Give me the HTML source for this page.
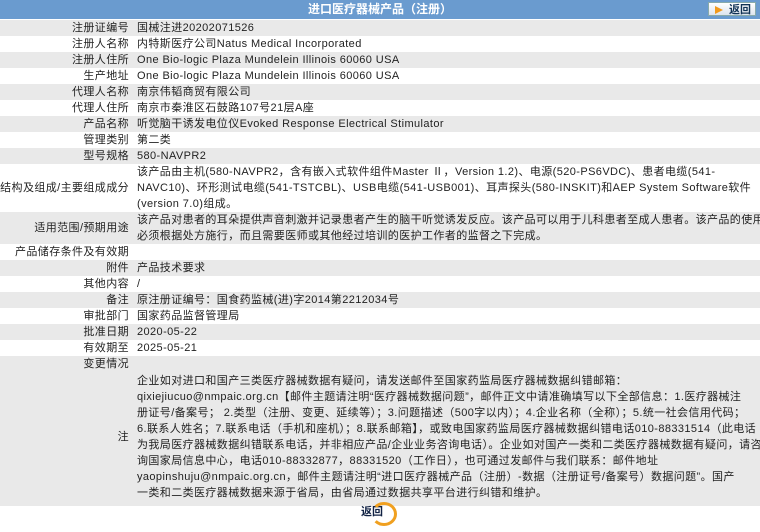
<!DOCTYPE html><html><head><meta charset="utf-8"><style>
body{margin:0;width:760px;height:532px;background:#fff;font:11px "Liberation Sans","Noto Sans CJK SC",sans-serif;letter-spacing:0.4px;color:#222;overflow:hidden;position:relative}
.hd{height:19px;background:#6a9bcf;color:#fff;font-weight:bold;text-align:center;line-height:19px;font-size:12px;letter-spacing:0;border-bottom:1px solid #fff}
.btn{position:absolute;right:4px;top:2px;width:48px;height:14px;background:linear-gradient(#fff,#dde4ee);border:1px solid #8aa;font-size:11px;line-height:14px;color:#135;font-weight:bold;text-align:right;padding-right:4px;box-sizing:border-box;letter-spacing:0}
.btn i{position:absolute;left:6px;top:3px;width:0;height:0;border-left:8px solid #f29a1c;border-top:4px solid transparent;border-bottom:4px solid transparent}
.r{display:flex;line-height:16px;white-space:nowrap}
.g{background:#e9e9e9}
.l{width:137px;text-align:right;padding-right:8px;box-sizing:border-box;flex:none;display:flex;align-items:center;justify-content:flex-end}
.v{flex:1}
.bk{position:absolute;left:361px;top:503px;font-weight:bold;font-size:11px;color:#124;letter-spacing:0}
.bk span{position:absolute;left:10px;top:-1px;width:26px;height:24px;border-radius:50%;border:3px solid #f0a020;border-left-color:transparent;box-sizing:border-box}
</style></head><body>
<div class="hd">进口医疗器械产品（注册）</div>
<div class="btn"><i></i>返回</div>
<div class="r g"><div class="l">注册证编号</div><div class="v">国械注进20202071526</div></div>
<div class="r"><div class="l">注册人名称</div><div class="v">内特斯医疗公司Natus Medical Incorporated</div></div>
<div class="r g"><div class="l">注册人住所</div><div class="v">One Bio-logic Plaza Mundelein Illinois 60060 USA</div></div>
<div class="r"><div class="l">生产地址</div><div class="v">One Bio-logic Plaza Mundelein Illinois 60060 USA</div></div>
<div class="r g"><div class="l">代理人名称</div><div class="v">南京伟韬商贸有限公司</div></div>
<div class="r"><div class="l">代理人住所</div><div class="v">南京市秦淮区石鼓路107号21层A座</div></div>
<div class="r g"><div class="l">产品名称</div><div class="v">听觉脑干诱发电位仪Evoked Response Electrical Stimulator</div></div>
<div class="r"><div class="l">管理类别</div><div class="v">第二类</div></div>
<div class="r g"><div class="l">型号规格</div><div class="v">580-NAVPR2</div></div>
<div class="r"><div class="l">结构及组成/主要组成成分</div><div class="v">该产品由主机(580-NAVPR2，含有嵌入式软件组件Master Ⅱ，Version 1.2)、电源(520-PS6VDC)、患者电缆(541-<br>NAVC10)、环形测试电缆(541-TSTCBL)、USB电缆(541-USB001)、耳声探头(580-INSKIT)和AEP System Software软件<br>(version 7.0)组成。</div></div>
<div class="r g"><div class="l">适用范围/预期用途</div><div class="v">该产品对患者的耳朵提供声音刺激并记录患者产生的脑干听觉诱发反应。该产品可以用于儿科患者至成人患者。该产品的使用<br>必须根据处方施行，而且需要医师或其他经过培训的医护工作者的监督之下完成。</div></div>
<div class="r"><div class="l">产品储存条件及有效期</div><div class="v"></div></div>
<div class="r g"><div class="l">附件</div><div class="v">产品技术要求</div></div>
<div class="r"><div class="l">其他内容</div><div class="v">/</div></div>
<div class="r g"><div class="l">备注</div><div class="v">原注册证编号：国食药监械(进)字2014第2212034号</div></div>
<div class="r"><div class="l">审批部门</div><div class="v">国家药品监督管理局</div></div>
<div class="r g"><div class="l">批准日期</div><div class="v">2020-05-22</div></div>
<div class="r"><div class="l">有效期至</div><div class="v">2025-05-21</div></div>
<div class="r g"><div class="l">变更情况</div><div class="v"></div></div>
<div class="r g" style="padding:1px 0 5px"><div class="l">注</div><div class="v">企业如对进口和国产三类医疗器械数据有疑问，请发送邮件至国家药监局医疗器械数据纠错邮箱：<br>qixiejiucuo@nmpaic.org.cn【邮件主题请注明“医疗器械数据问题”，邮件正文中请准确填写以下全部信息：1.医疗器械注<br>册证号/备案号； 2.类型（注册、变更、延续等）；3.问题描述（500字以内）；4.企业名称（全称）；5.统一社会信用代码；<br>6.联系人姓名；7.联系电话（手机和座机）；8.联系邮箱】，或致电国家药监局医疗器械数据纠错电话010-88331514（此电话<br>为我局医疗器械数据纠错联系电话，并非相应产品/企业业务咨询电话）。企业如对国产一类和二类医疗器械数据有疑问，请咨<br>询国家局信息中心，电话010-88332877，88331520（工作日），也可通过发邮件与我们联系：邮件地址<br>yaopinshuju@nmpaic.org.cn，邮件主题请注明“进口医疗器械产品（注册）-数据（注册证号/备案号）数据问题”。国产<br>一类和二类医疗器械数据来源于省局，由省局通过数据共享平台进行纠错和维护。</div></div>
<div class="bk">返回<span></span></div>
</body></html>
